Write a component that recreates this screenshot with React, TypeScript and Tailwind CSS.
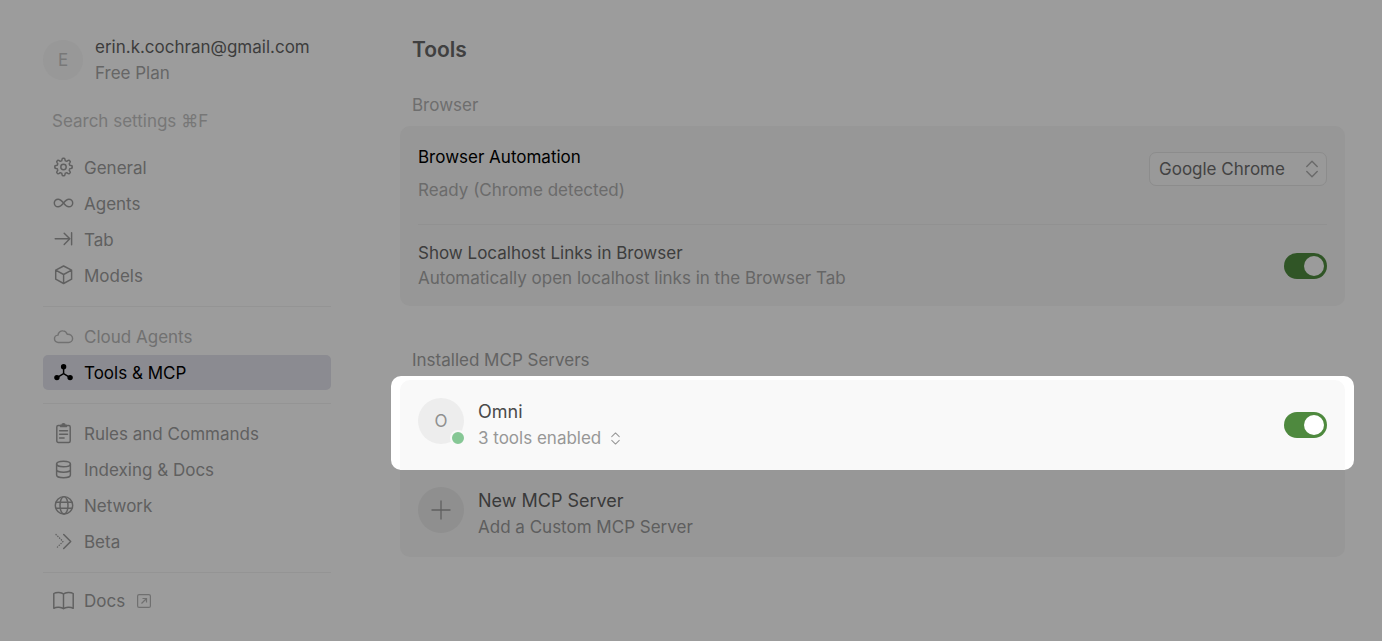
import type { ReactNode } from "react";

type NavItem = {
    label: string;
    icon: ReactNode;
    active?: boolean;
    muted?: boolean;
};

// Outline of a cog with eight rounded teeth
const gearPath = (() => {
    const points: string[] = [];
    for (let i = 0; i < 160; i++) {
        const angle = (i / 160) * Math.PI * 2;
        const wave = Math.max(-1, Math.min(1, Math.cos(angle * 8) * 1.8));
        const radius = 7.6 + wave * 1.1;
        const x = 10.5 + Math.cos(angle) * radius;
        const y = 10 + Math.sin(angle) * radius;
        points.push(`${x.toFixed(2)} ${y.toFixed(2)}`);
    }
    return `M${points.join("L")}Z`;
})();

function Icon({ children }: { children: ReactNode }) {
    return (
        <svg
            viewBox="0 0 21 21"
            fill="none"
            stroke="currentColor"
            strokeWidth="1.45"
            strokeLinecap="round"
            strokeLinejoin="round"
            className="size-[21px] shrink-0"
            aria-hidden="true"
        >
            {children}
        </svg>
    );
}

const navGroups: NavItem[][] = [
    [
        {
            label: "General",
            icon: (
                <Icon>
                    <path d={gearPath} />
                    <circle cx="10.5" cy="10" r="2.7" />
                </Icon>
            ),
        },
        {
            label: "Agents",
            icon: (
                <Icon>
                    <path d="M10.5 10C8.5 7.4 7.4 6.2 5.1 6.2a3.8 3.8 0 0 0 0 7.6c2.3 0 3.4-1.2 5.4-3.8s3.1-3.8 5.4-3.8a3.8 3.8 0 0 1 0 7.6c-2.3 0-3.4-1.2-5.4-3.8Z" />
                </Icon>
            ),
        },
        {
            label: "Tab",
            icon: (
                <Icon>
                    <path d="M2.2 9.8h14.6M11.2 4.2l5.6 5.6-5.6 5.6M18.6 3.8v12" />
                </Icon>
            ),
        },
        {
            label: "Models",
            icon: (
                <Icon>
                    <path d="M10.6 1l8 4.2v9l-8 4.3-7.9-4.3v-9ZM2.7 5.2l7.9 4.3 8-4.3M10.6 9.5v9" />
                </Icon>
            ),
        },
    ],
    [
        {
            label: "Cloud Agents",
            muted: true,
            icon: (
                <Icon>
                    <path d="M5.4 16.5A3.7 3.7 0 0 1 5 9.1c.2-2.6 2.4-4.4 4.9-4.2 2 .1 3.6 1.4 4.3 3.4 3.1-.2 5.4 1.4 5.4 4.2a4 4 0 0 1-4 4Z" />
                </Icon>
            ),
        },
        {
            label: "Tools & MCP",
            active: true,
            icon: (
                <Icon>
                    <path d="M10.6 4.7v7M10.6 11.7l-6.7 3.9M10.6 11.7l6.5 3.9" />
                    <g fill="currentColor" stroke="none">
                        <circle cx="10.6" cy="4.7" r="2.7" />
                        <circle cx="3.9" cy="15.6" r="2.7" />
                        <circle cx="17.1" cy="15.6" r="2.7" />
                    </g>
                </Icon>
            ),
        },
    ],
    [
        {
            label: "Rules and Commands",
            icon: (
                <Icon>
                    <path d="M6.5 2.5H5.3A1.5 1.5 0 0 0 3.8 4v14a1.5 1.5 0 0 0 1.5 1.5h10.4a1.5 1.5 0 0 0 1.5-1.5V4a1.5 1.5 0 0 0-1.5-1.5h-1.2" />
                    <path d="M7.5 3.5V2.3H9a1.5 1.5 0 0 1 3 0h1.5v1.2Z" fill="currentColor" />
                    <path d="M6.6 7.7h7.9M6.6 11.3h7.9M6.6 14.9h4.5" />
                </Icon>
            ),
        },
        {
            label: "Indexing & Docs",
            icon: (
                <Icon>
                    <ellipse cx="10.5" cy="5" rx="6.9" ry="2.8" />
                    <path d="M3.6 5v11c0 1.5 3 2.8 6.9 2.8s6.9-1.3 6.9-2.8V5M3.6 10.5c0 1.5 3 2.8 6.9 2.8s6.9-1.3 6.9-2.8" />
                </Icon>
            ),
        },
        {
            label: "Network",
            icon: (
                <Icon>
                    <circle cx="11" cy="10.3" r="8.7" />
                    <ellipse cx="11" cy="10.3" rx="4" ry="8.7" />
                    <path d="M3.3 7.3h15.4M3.3 13.3h15.4" />
                </Icon>
            ),
        },
        {
            label: "Beta",
            icon: (
                <Icon>
                    <path d="M3 3.5l7 7-7 7" strokeDasharray="0.3 2.2" strokeWidth="1.3" />
                    <path d="M10.7 3.5l7 7-7 7" />
                </Icon>
            ),
        },
    ],
];

function Sorter({ className }: { className: string }) {
    return (
        <svg
            viewBox="0 0 12 18"
            fill="none"
            stroke="currentColor"
            strokeWidth="1.4"
            strokeLinecap="round"
            strokeLinejoin="round"
            className={className}
            aria-hidden="true"
        >
            <path d="M0.8 6.5L6 1.3l5.2 5.2M0.8 11.5L6 16.7l5.2-5.2" />
        </svg>
    );
}

function NavLink({ item }: { item: NavItem }) {
    const tone = item.active
        ? "bg-[#8b8b91] text-black"
        : item.muted
          ? "text-[#717171]"
          : "text-[#606060]";

    return (
        <a
            href="#"
            aria-current={item.active ? "page" : undefined}
            className={`flex h-[35px] items-center gap-[10px] rounded-[5px] px-[10px] ${tone}`}
        >
            {item.icon}
            {item.label}
        </a>
    );
}

function Sidebar() {
    return (
        <aside className="w-[288px] shrink-0">
            <div className="flex items-center gap-3">
                <div className="flex size-10 items-center justify-center rounded-full bg-[#989898] text-[#787878]">
                    E
                </div>
                <div className="leading-[26px]">
                    <p className="text-[#3d3d3d]">erin.k.cochran@gmail.com</p>
                    <p className="text-[#666666]">Free Plan</p>
                </div>
            </div>

            <input
                type="search"
                aria-label="Search settings"
                placeholder="Search settings ⌘F"
                className="mt-[17px] mb-[12px] h-[35px] w-full bg-transparent px-[9px] outline-none placeholder:text-[#777777]"
            />

            <nav aria-label="Settings">
                {navGroups.map((group) => (
                    <div
                        key={group[0].label}
                        className="mb-3 flex flex-col gap-px border-b border-[#949494] pb-[13px]"
                    >
                        {group.map((item) => (
                            <NavLink key={item.label} item={item} />
                        ))}
                    </div>
                ))}
                <a href="#" className="flex h-8 items-center gap-[10px] px-[10px] text-[#606060]">
                    <Icon>
                        <path d="M10.5 3C8.5 1.2 3.5.8.8 2.5v14.8c2.7-1.7 7.7-1.3 9.7.5 2-1.8 7-2.2 9.7-.5V2.5C17.5.8 12.5 1.2 10.5 3ZM10.5 3v14.8" />
                    </Icon>
                    Docs
                    <svg
                        viewBox="0 0 14 14"
                        fill="none"
                        stroke="currentColor"
                        strokeWidth="1.2"
                        className="ml-[2px] size-[14px] text-[#707070]"
                        aria-hidden="true"
                    >
                        <rect x="0.6" y="0.6" width="12.8" height="12.8" rx="1.5" />
                        <path d="M4.5 9.5l5-5M5.5 4.5h4v4" />
                    </svg>
                </a>
            </nav>
        </aside>
    );
}

function Toggle({ id, className }: { id: string; className: string }) {
    return (
        <input
            id={id}
            type="checkbox"
            role="switch"
            defaultChecked
            className={`h-[26px] w-[43px] shrink-0 appearance-none rounded-full p-[3px] before:block before:size-5 before:rounded-full checked:before:ml-auto ${className}`}
        />
    );
}

function BrowserSection() {
    return (
        <section>
            <h2 className="px-3 text-[#6e6e6e]">Browser</h2>
            <div className="mt-[9px] rounded-[10px] bg-[#979797] px-[18px]">
                <div className="flex items-start justify-between border-b border-[#919191] pt-[19px] pb-[22px]">
                    <div>
                        <label htmlFor="browser" className="block text-black">
                            Browser Automation
                        </label>
                        <p className="mt-[9px] text-[#6b6b6b]">Ready (Chrome detected)</p>
                    </div>
                    <div className="relative mt-[7px]">
                        <select
                            id="browser"
                            className="h-[34px] w-[178px] appearance-none rounded-[7px] border border-[#8c8c8c] bg-[#999999] pl-[9px] text-[#434343]"
                        >
                            <option>Google Chrome</option>
                        </select>
                        <Sorter className="pointer-events-none absolute top-2 right-[9px] h-[18px] w-3 text-[#6a6a6a]" />
                    </div>
                </div>
                <div className="flex items-center justify-between pt-4 pb-[15px]">
                    <div className="leading-[25px]">
                        <label htmlFor="localhost" className="block text-[#3d3d3d]">
                            Show Localhost Links in Browser
                        </label>
                        <p className="text-[#666666]">
                            Automatically open localhost links in the Browser Tab
                        </p>
                    </div>
                    <Toggle id="localhost" className="bg-[#305526] before:bg-[#9b9b9b]" />
                </div>
            </div>
        </section>
    );
}

function ServersSection() {
    return (
        <section className="mt-[42px]">
            <h2 className="px-3 text-[#636363]">Installed MCP Servers</h2>
            <div className="-mx-[9px] mt-1 rounded-[10px] bg-white px-[9px] pt-[4px]">
                <div className="flex items-center gap-[14px] rounded-t-[10px] bg-[#f9f9f9] px-[18px] py-[18px]">
                    <div className="relative -mt-2 flex size-[46px] items-center justify-center rounded-full bg-[#ededed] text-[#8f8f8f]">
                        O
                        <span className="absolute -right-[2px] -bottom-[2px] size-4 rounded-full border-2 border-[#f9f9f9] bg-[#86c795]" />
                    </div>
                    <div className="flex-1 leading-[27px]">
                        <label htmlFor="omni" className="block text-[18px] text-[#4a4a4a]">
                            Omni
                        </label>
                        <button type="button" className="flex items-center gap-[10px] text-[#979797]">
                            3 tools enabled
                            <Sorter className="h-[13px] w-[9px]" />
                        </button>
                    </div>
                    <Toggle id="omni" className="bg-[#4e893e] before:bg-white" />
                </div>
            </div>
            <button
                type="button"
                className="flex w-full items-center gap-[14px] rounded-b-[10px] bg-[#979797] px-[18px] pt-[18px] pb-[17px] text-left"
            >
                <span className="-mt-2 flex size-[46px] items-center justify-center rounded-full bg-[#8f8f8f] text-[#606060]">
                    <svg viewBox="0 0 20 20" stroke="currentColor" strokeWidth="1.3" className="size-5" aria-hidden="true">
                        <path d="M10 .5v19M.5 10h19" />
                    </svg>
                </span>
                <span className="leading-[26px]">
                    <span className="block text-[18px] text-[#3a3a3a]">New MCP Server</span>
                    <span className="block text-[#5e5e5e]">Add a Custom MCP Server</span>
                </span>
            </button>
        </section>
    );
}

export default function App() {
    return (
        <div className="flex min-h-screen gap-[69px] bg-[#9c9c9c] pt-[34px] pr-[37px] pl-[43px] font-['Inter','Liberation_Sans',sans-serif] text-[17px] leading-6">
            <Sidebar />
            <main className="min-w-0 flex-1">
                <h1 className="mb-[27px] px-3 text-[21px] leading-8 font-semibold text-[#404040]">Tools</h1>
                <BrowserSection />
                <ServersSection />
            </main>
        </div>
    );
}
